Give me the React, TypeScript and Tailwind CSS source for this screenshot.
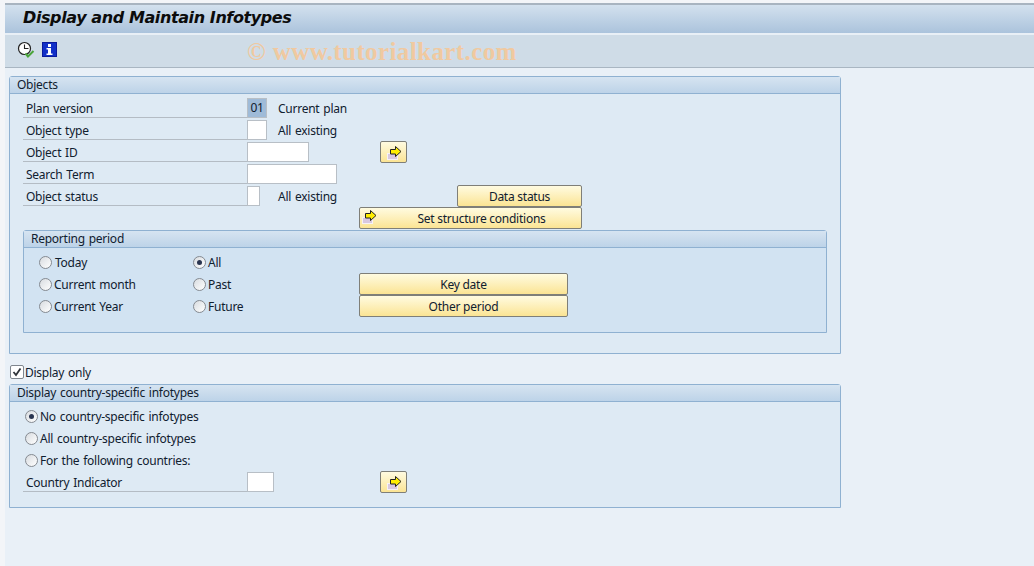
const font = "font-['Noto_Sans','Open_Sans',sans-serif]";

function ArrowIcon() {
  return (
    <svg width="16" height="15" viewBox="0 0 16 15" className="shrink-0">
      <rect x="1.5" y="7.5" width="10" height="6" fill="#d8c8e0" stroke="#f6f2f6" />
      <path d="M9.5 0.5 L15 5.5 L9.5 10.5 V8 H4.5 V3.5 H9.5 Z" fill="#ffee00" stroke="#222" strokeWidth="1" />
    </svg>
  );
}

function ClockIcon() {
  return (
    <svg width="18" height="18" viewBox="0 0 18 18">
      <circle cx="7.5" cy="7.5" r="6" fill="#fff" stroke="#222" strokeWidth="1.2" />
      <path d="M7.5 3.5 V7.5 H11.5" fill="none" stroke="#222" strokeWidth="1.1" />
      <path d="M8.5 12.5 L11 15.5 L16.5 10" fill="none" stroke="#4aa53a" strokeWidth="2" />
    </svg>
  );
}

function InfoIcon() {
  return (
    <svg width="15" height="15" viewBox="0 0 15 15" className="mt-px">
      <rect width="15" height="15" fill="#0a1a9c" />
      <rect x="1" y="1" width="13" height="13" fill="#1230c8" />
      <rect x="6" y="2" width="3" height="3" fill="#fff" />
      <path d="M4.5 6 H9 V11.5 H10.5 V13 H4.5 V11.5 H6 V7.5 H4.5 Z" fill="#fff" />
    </svg>
  );
}

function Radio({ on }: { on?: boolean }) {
  return (
    <span className="flex h-[13px] w-[13px] shrink-0 items-center justify-center rounded-full border border-[#858a91] bg-gradient-to-br from-[#d8dce0] to-white">
      {on && <span className="h-[5px] w-[5px] rounded-full bg-[#2a3550]" />}
    </span>
  );
}

function RadioText({ on, children, gap }: { on?: boolean; children: string; gap: string }) {
  return (
    <div className={`flex h-[22px] items-center ${gap}`}>
      <Radio on={on} />
      <span className="pt-[2px]">{children}</span>
    </div>
  );
}

function Field({ label, width, value, text, children }: { label: string; width: string; value?: string; text?: string; children?: React.ReactNode }) {
  return (
    <div className="flex h-[22px]">
      <div className="h-[21px] w-[224px] border-b border-[#b4bcc4] pl-[3px] leading-[23px]">{label}</div>
      <div className={text ? 'w-[31px]' : ''}>
        <div className={`mt-px flex h-[20px] items-center justify-center border border-[#b8bfc6] ${width} ${value ? 'bg-[#9fbbd8]' : 'bg-white'}`}>{value}</div>
      </div>
      {text && <div className="w-[179px] leading-[23px]">{text}</div>}
      {children}
    </div>
  );
}

function SapButton({ width, icon, children, className = '' }: { width: string; icon?: boolean; children?: string; className?: string }) {
  return (
    <button className={`relative flex h-[22px] items-center justify-center rounded-[2px] border border-[#7f7f78] bg-gradient-to-b from-[#fffbe0] to-[#fbe493] pt-[2px] ${icon && children ? 'pl-[22px]' : ''} ${width} ${className}`}>
      {icon && <span className={children ? 'absolute left-px top-[2px]' : 'pl-px'}><ArrowIcon /></span>}
      {children}
    </button>
  );
}

function GroupHeader({ title }: { title: string }) {
  return (
    <div className="h-[17px] border-b border-[#8fb1d1] bg-gradient-to-b from-[#d6e4f1] to-[#bdd3e8] pl-[7px] leading-[15px]">{title}</div>
  );
}

export default function App() {
  return (
    <div className={`h-[566px] w-[1034px] overflow-hidden bg-[#f3f5f8] pl-[5px] pt-[3px] text-[12px] tracking-[-0.25px] text-[#10202f] [word-spacing:1px] ${font}`}>
      <div className="h-[563px] bg-[#e9f0f7]">
        <div className="h-[32px] border-t-2 border-b-2 border-t-[#a8b4c0] border-b-[#e8eff6] bg-gradient-to-b from-[#d3e1ee] to-[#abc3dc] pl-[18px] text-[16px] font-bold italic leading-[26px] tracking-[-0.4px] text-[#0c0c0c] [word-spacing:0] font-['DejaVu_Sans',sans-serif]">
          Display and Maintain Infotypes
        </div>
        <div className="relative flex h-[33px] items-start gap-[7px] border-b border-[#a9b6c2] bg-[#cfdce7] pl-[12px] pt-[6px]">
          <ClockIcon />
          <InfoIcon />
          <div className="absolute left-[242px] top-[2px] font-['Liberation_Serif',serif] text-[25px] font-bold leading-[30px] tracking-[0.4px] text-[#f0c9a0] [word-spacing:0]">© www.tutorialkart.com</div>
        </div>

        <div className="pl-[4px] pt-[8px]">
          <section className="h-[278px] w-[832px] rounded-t-[3px] border border-[#8fb1d1] bg-[#deeaf4]">
            <GroupHeader title="Objects" />
            <div className="pl-[13px] pt-[3px]">
              <Field label="Plan version" width="w-[20px]" value="01" text="Current plan" />
              <Field label="Object type" width="w-[20px]" text="All existing" />
              <Field label="Object ID" width="w-[62px]">
                <SapButton width="w-[27px]" icon className="ml-[71px]" />
              </Field>
              <Field label="Search Term" width="w-[90px]" />
              <Field label="Object status" width="w-[13px]" text="All existing">
                <SapButton width="w-[125px]">Data status</SapButton>
              </Field>
              <SapButton width="w-[223px]" icon className="ml-[336px]">Set structure conditions</SapButton>

              <section className="mt-px h-[103px] w-[804px] rounded-t-[3px] border border-[#8fb1d1] bg-[#d2e3f2]">
                <GroupHeader title="Reporting period" />
                <div className="flex pl-[15px] pt-[3px]">
                  <div className="w-[154px]">
                    <RadioText gap="gap-[3px]">Today</RadioText>
                    <RadioText gap="gap-[2px]">Current month</RadioText>
                    <RadioText gap="gap-[2px]">Current Year</RadioText>
                  </div>
                  <div className="w-[166px]">
                    <RadioText on gap="gap-[2px]">All</RadioText>
                    <RadioText gap="gap-[2px]">Past</RadioText>
                    <RadioText gap="gap-[2px]">Future</RadioText>
                  </div>
                  <div className="pt-[22px]">
                    <SapButton width="w-[209px]">Key date</SapButton>
                    <SapButton width="w-[209px]">Other period</SapButton>
                  </div>
                </div>
              </section>
            </div>
          </section>

          <div className="flex h-[30px] items-center gap-px pl-px pt-[6px]">
            <span className="flex h-[14px] w-[14px] items-center justify-center rounded-[2px] border border-[#7f868e] bg-white">
              <svg width="10" height="10" viewBox="0 0 10 10"><path d="M1.5 5 L4 8 L8.5 1.5" fill="none" stroke="#30343a" strokeWidth="1.8" /></svg>
            </span>
            <span className="pt-[2px]">Display only</span>
          </div>

          <section className="h-[124px] w-[832px] rounded-t-[3px] border border-[#8fb1d1] bg-[#deeaf4]">
            <GroupHeader title="Display country-specific infotypes" />
            <div className="pl-[13px] pt-[3px]">
              <div className="pl-[2px]">
                <RadioText on gap="gap-[2px]">No country-specific infotypes</RadioText>
                <RadioText gap="gap-[2px]">All country-specific infotypes</RadioText>
                <RadioText gap="gap-[2px]">For the following countries:</RadioText>
              </div>
              <Field label="Country Indicator" width="w-[27px]">
                <SapButton width="w-[27px]" icon className="ml-[106px]" />
              </Field>
            </div>
          </section>
        </div>
      </div>
    </div>
  );
}
